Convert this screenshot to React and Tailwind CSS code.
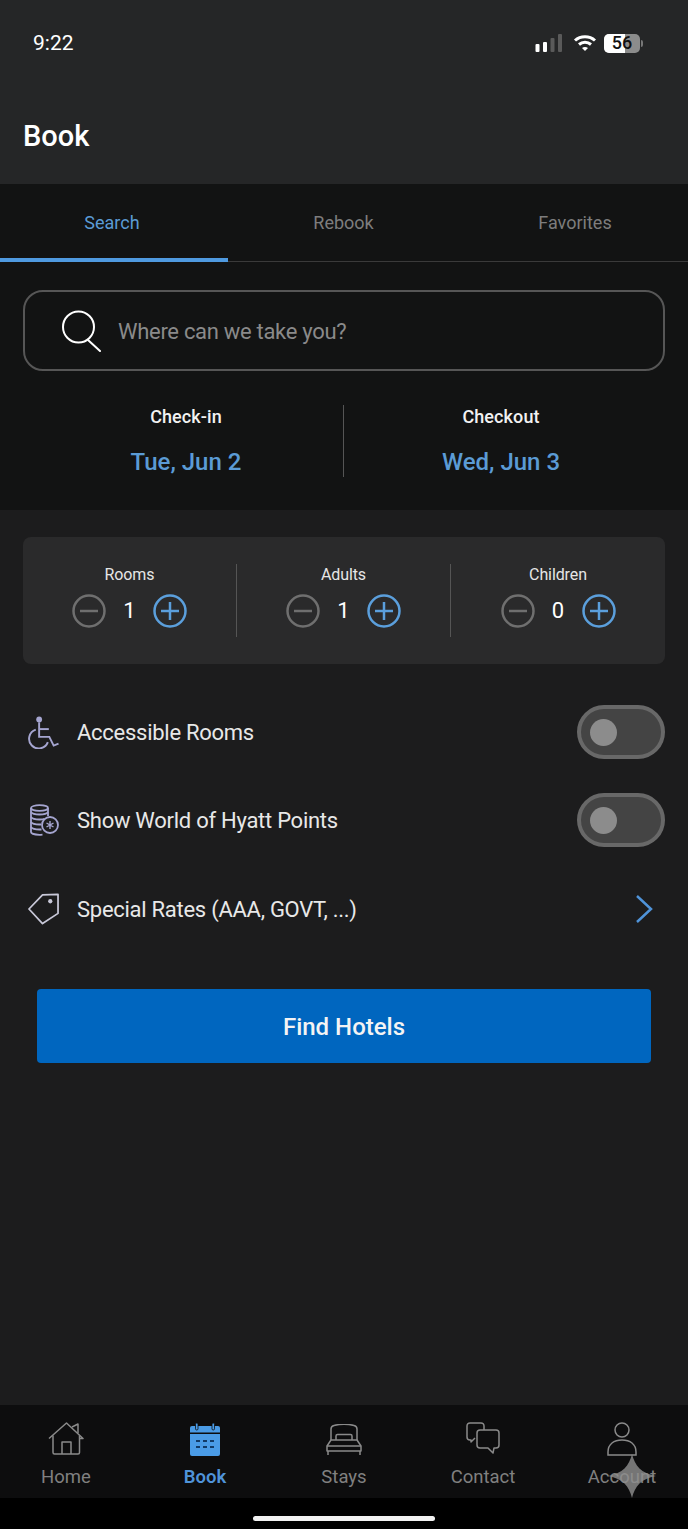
const tabs = ["Search", "Rebook", "Favorites"];
const counters = [
  { label: "Rooms", value: 1 },
  { label: "Adults", value: 1 },
  { label: "Children", value: 0 },
];

function StatusIcons() {
  return (
    <div className="flex items-center mr-[45px]">
      <svg width="32" height="20" viewBox="0 0 32 20" className="mr-[6px]">
        <rect x="0.500" y="11" width="4" height="8" rx="1" fill="#fff" />
        <rect x="8" y="9" width="4" height="10" rx="1" fill="#fff" />
        <rect x="15.500" y="5" width="4" height="14" rx="1" fill="#5a5a5a" />
        <rect x="23" y="1" width="4" height="18" rx="1" fill="#5a5a5a" />
      </svg>
      <svg width="24" height="20" viewBox="0 0 24 20" fill="none" stroke="#fff" strokeWidth="3" className="mr-[7px]">
        <path d="M2 7.500c5.500-5 14.500-5 20 0" />
        <path d="M6 11.500c3.500-3 8.500-3 12 0" />
        <path d="M12 18l-3-3c1.800-1.300 4.200-1.300 6 0z" fill="#fff" stroke="none" />
      </svg>
      <div className="relative flex h-[19px] w-[36px] items-center justify-center overflow-hidden rounded-[5px] bg-[#8c8c8c] text-[18px] font-medium leading-none text-[#111]">
        <div className="absolute inset-y-0 left-0 w-[21px] bg-white" />
        <span className="relative">56</span>
      </div>
      <div className="ml-[1px] h-[7px] w-[2px] rounded-r-sm bg-[#777]" />
    </div>
  );
}

function SearchIcon() {
  return (
    <svg width="39" height="42" viewBox="0 0 39 42" fill="none" stroke="#fff" strokeWidth="2" strokeLinecap="round">
      <circle cx="16.500" cy="17" r="15.500" />
      <path d="M26 30l12 11" />
    </svg>
  );
}

function RoundButton({ kind }) {
  const color = kind === "plus" ? "#5b9fdc" : "#6f6f6f";
  return (
    <svg width="34" height="34" viewBox="0 0 34 34" fill="none" stroke={color} strokeWidth="2.500">
      <circle cx="17" cy="17" r="15.500" />
      <path d="M8 17h18" />
      {kind === "plus" && <path d="M17 8v18" />}
    </svg>
  );
}

function Counter({ label, value, divided }) {
  return (
    <div className={"flex h-[73px] flex-col items-center pt-[1px] " + (divided ? "border-r border-[#555]" : "")}>
      <div className="text-[16px] leading-[20px] tracking-[-0.1px] text-[#e6e6e6]">{label}</div>
      <div className="mt-[9px] flex w-[115px] items-center justify-between">
        <RoundButton kind="minus" />
        <span className="text-[22px] leading-[34px] text-white">{value}</span>
        <RoundButton kind="plus" />
      </div>
    </div>
  );
}

function Toggle() {
  return (
    <div className="flex h-[54px] w-[88px] items-center rounded-full border-[4px] border-[#686868] bg-[#444444] pl-[9px]">
      <div className="h-[27px] w-[27px] rounded-full bg-[#8c8c8c]" />
    </div>
  );
}

function WheelchairIcon() {
  return (
    <svg width="32" height="34" viewBox="0 0 32 34" fill="none" stroke="#a5a5d0" strokeWidth="2">
      <circle cx="11.500" cy="4" r="3" fill="#a5a5d0" stroke="none" />
      <path d="M11.500 7v15h10.500l4.500 9 5-2" />
      <path d="M11.500 14h10" />
      <path d="M8 14.500a10 10 0 1 0 12.500 13" />
    </svg>
  );
}

function PointsIcon() {
  return (
    <svg width="30" height="32" viewBox="0 0 30 32" fill="none" stroke="#a5a5d0" strokeWidth="1.800">
      <ellipse cx="10.500" cy="4" rx="8.500" ry="2.800" />
      <path d="M2 4v24c0 1.500 3.500 2.800 8.500 2.800 1 0 2-.1 3-.2" />
      <path d="M19 4v8" />
      <path d="M2 8c1 1.500 4 2.500 8.500 2.500S18 9.700 19 8" />
      <path d="M2 13c1 1.500 4 2.500 8.500 2.500 2 0 4-.2 5-.6" />
      <path d="M2 18c1 1.500 4 2.500 8.500 2.500h1.500" />
      <path d="M2 23c1 1.500 4 2.500 8.500 2.500h2" />
      <circle cx="21" cy="21" r="8" />
      <path d="M21 17v8M17.500 19l7 4M24.500 19l-7 4" strokeWidth="1.400" />
    </svg>
  );
}

function TagIcon() {
  return (
    <svg width="32" height="32" viewBox="0 0 32 32" fill="none" stroke="#c8c8d8" strokeWidth="1.800" strokeLinejoin="round">
      <path d="M1 16L15 1.500l16-.5v19.500L15 31z" />
      <circle cx="23" cy="8" r="2.200" fill="#c8c8d8" stroke="none" />
    </svg>
  );
}

function OptionRow({ icon, label, children }) {
  return (
    <div className="flex h-[88px] items-center justify-between">
      <div className="flex items-center">
        <div className="flex w-[54px] justify-center pl-[5px] pr-[18px]">{icon}</div>
        <span className="text-[22px] tracking-[-0.27px] text-[#e8e8e8]">{label}</span>
      </div>
      {children}
    </div>
  );
}

function HomeIcon() {
  return (
    <svg width="36" height="34" viewBox="0 0 36 34" fill="none" stroke="#8a8a8a" strokeWidth="1.500" strokeLinejoin="round">
      <path d="M1 16.500L18.500 1 35 16.500h-3.500" />
      <path d="M5 13.500v17c0 1 .5 1.500 1.500 1.500h23.500c1 0 1.500-.5 1.500-1.500V13.500" />
      <path d="M14 32V20h9v12" />
      <path d="M24 5l6-3v9" />
    </svg>
  );
}

function CalendarIcon() {
  return (
    <svg width="30" height="33" viewBox="0 0 30 33">
      <rect x="0" y="3" width="30" height="30" rx="2" fill="#4a9be6" />
      <rect x="0" y="9.500" width="30" height="1.500" fill="#0d0d0e" />
      <rect x="5.500" y="0" width="2.500" height="7" rx="1.200" fill="#4a9be6" stroke="#0d0d0e" strokeWidth="0.800" />
      <rect x="22" y="0" width="2.500" height="7" rx="1.200" fill="#4a9be6" stroke="#0d0d0e" strokeWidth="0.800" />
      <path d="M6 18h4M13 18h4M20 18h4M6 24h4M13 24h4M20 24h4" stroke="#123a66" strokeWidth="2" />
    </svg>
  );
}

function BedIcon() {
  return (
    <svg width="36" height="32" viewBox="0 0 36 32" fill="none" stroke="#8a8a8a" strokeWidth="1.500" strokeLinejoin="round">
      <path d="M5 16V5c0-2 1-3 3-3.500 6-1.500 14-1.500 20 0 2 .5 3 1.500 3 3.500v11" />
      <path d="M10 16v-4c0-1 .5-1.500 1.500-1.500h13c1 0 1.500.5 1.500 1.500v4" />
      <path d="M1 22l4-6h26l4 6v5H1z" />
      <path d="M1 22h34M2 27v4M34 27v4" />
    </svg>
  );
}

function ChatIcon() {
  return (
    <svg width="34" height="34" viewBox="0 0 34 34" fill="none" stroke="#8a8a8a" strokeWidth="1.500" strokeLinejoin="round">
      <path d="M18 8V4c0-1.800-1.200-3-3-3H4C2.200 1 1 2.200 1 4v11c0 1.800 1.200 3 3 3h1v2l4-4" />
      <path d="M11 11c0-1.800 1.200-3 3-3h16c1.800 0 3 1.200 3 3v12c0 1.800-1.200 3-3 3h-2l-1 5-5-5H14c-1.800 0-3-1.200-3-3z" />
    </svg>
  );
}

function UserIcon() {
  return (
    <svg width="30" height="34" viewBox="0 0 30 34" fill="none" stroke="#8a8a8a" strokeWidth="1.500">
      <circle cx="15" cy="8" r="7" />
      <path d="M1 33v-3c0-8 6-12 14-12s14 4 14 12v3z" />
    </svg>
  );
}

function NavItem({ icon, label, active }) {
  return (
    <div className="flex w-[100px] flex-col items-center">
      <div className="flex h-[34px] items-end">{icon}</div>
      <div className={"mt-[10px] text-[18.500px] leading-[22px] " + (active ? "font-semibold text-[#4f93d9]" : "text-[#808080]")}>
        {label}
      </div>
    </div>
  );
}

export default function App() {
  return (
    <div className="relative flex h-[1529px] w-[688px] flex-col overflow-hidden bg-[#1c1c1d] font-['Roboto',sans-serif]">
      <header className="h-[184px] bg-[#252627] pl-[23px]">
        <div className="flex h-[87px] items-center justify-between pb-[1px]">
          <span className="mt-[2px] pl-[10px] text-[21px] text-white">9:22</span>
          <StatusIcons />
        </div>
        <h1 className="mt-[29px] text-[29px] font-medium leading-[40px] text-white">Book</h1>
      </header>

      <section className="h-[326px] bg-[#121313]">
        <div className="flex h-[78px] border-b border-[#3a3a3a]">
          <div className="-mb-px flex h-[78px] w-[228px] items-center justify-center border-b-[4px] border-[#4f9ae0] pb-[1px] pr-[4px] text-[18px] text-[#5b9bd5]">
            <span className="mt-[4px]">{tabs[0]}</span>
          </div>
          <div className="flex w-[231px] items-center justify-center pb-[1px] text-[18px] text-[#7d7d7d]">{tabs[1]}</div>
          <div className="flex flex-1 items-center justify-center pb-[1px] pl-[3px] text-[18px] text-[#7d7d7d]">{tabs[2]}</div>
        </div>

        <div className="px-[23px] pt-[28px]">
          <div className="flex h-[81px] items-center rounded-[20px] border-2 border-[#565656] pl-[37px]">
            <SearchIcon />
            <span className="ml-[17px] mt-[1px] text-[22px] tracking-[-0.3px] text-[#8a8a8a]">Where can we take you?</span>
          </div>

          <div className="mt-[34px] flex h-[72px] text-center">
            <div className="w-[320px] pl-[6px]">
              <div className="mt-[1px] text-[18px] font-medium leading-[22px] tracking-[0.1px] text-[#f2f2f2]">Check-in</div>
              <div className="mt-[19px] text-[24px] font-medium leading-[30px] text-[#5b9bd5]">Tue, Jun 2</div>
            </div>
            <div className="w-[1px] bg-[#555]" />
            <div className="flex-1 pr-[7px]">
              <div className="mt-[1px] text-[18px] font-medium leading-[22px] tracking-[0.1px] text-[#f2f2f2]">Checkout</div>
              <div className="mt-[19px] text-[24px] font-medium leading-[30px] text-[#5b9bd5]">Wed, Jun 3</div>
            </div>
          </div>
        </div>
      </section>

      <main className="flex-1 px-[23px] pt-[27px]">
        <div className="grid h-[127px] grid-cols-3 items-start rounded-[8px] bg-[#2a2a2b] pt-[27px]">
          {counters.map((c, i) => (
            <Counter key={c.label} label={c.label} value={c.value} divided={i < 2} />
          ))}
        </div>

        <div className="mt-[24px]">
          <OptionRow icon={<WheelchairIcon />} label="Accessible Rooms">
            <Toggle />
          </OptionRow>
          <OptionRow icon={<PointsIcon />} label="Show World of Hyatt Points">
            <Toggle />
          </OptionRow>
          <div className="pt-[1px]">
            <OptionRow icon={<TagIcon />} label="Special Rates (AAA, GOVT, ...)">
              <svg width="18" height="30" viewBox="0 0 18 30" fill="none" stroke="#4f93d9" strokeWidth="2.500" className="mr-[12px]">
                <path d="M2 2l14 13L2 28" />
              </svg>
            </OptionRow>
          </div>
        </div>

        <button
          type="button"
          className="mx-[14px] mt-[36px] h-[74px] w-[614px] rounded-[4px] bg-[#0066bf] pt-[2px] text-[24px] font-medium text-[#f4f4f4]"
        >
          Find Hotels
        </button>
      </main>

      <nav className="flex h-[93px] justify-between bg-[#0d0d0e] px-[16px] pt-[17px]">
        <NavItem icon={<HomeIcon />} label="Home" />
        <NavItem icon={<CalendarIcon />} label="Book" active />
        <NavItem icon={<BedIcon />} label="Stays" />
        <NavItem icon={<ChatIcon />} label="Contact" />
        <NavItem icon={<UserIcon />} label="Account" />
      </nav>

      <div className="flex h-[31px] justify-center bg-black pt-[18px]">
        <div className="h-[5px] w-[182px] rounded-full bg-[#f2f2f2]" />
      </div>

      <svg width="48" height="44" viewBox="0 0 48 48" preserveAspectRatio="none" className="absolute left-[608px] top-[1454px] opacity-80">
        <path d="M24 0c3 13 9 21 24 24-15 3-21 11-24 24-3-13-9-21-24-24 15-3 21-11 24-24z" fill="#8f8f8f" />
      </svg>
    </div>
  );
}
